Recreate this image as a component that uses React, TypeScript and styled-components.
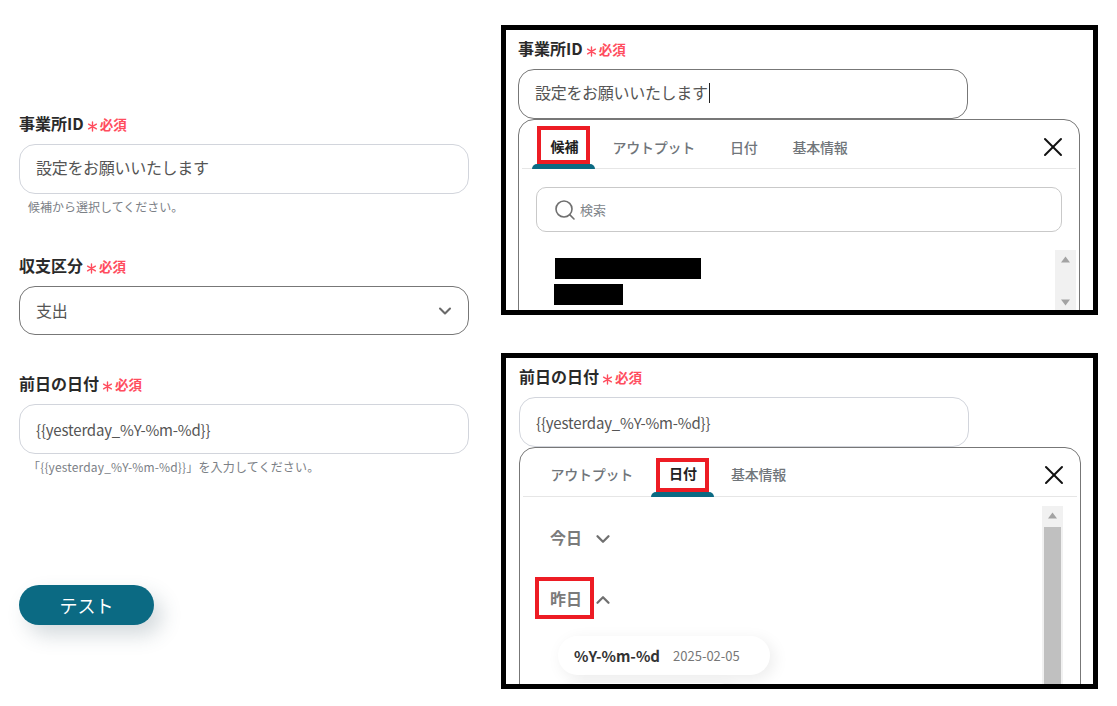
import React from 'react';
import styled, { createGlobalStyle } from 'styled-components';
import { ChevronDown, ChevronUp, Search, X } from 'lucide-react';

const GlobalStyle = createGlobalStyle`
  html, body {
    margin: 0;
    padding: 0;
    background: #fff;
    font-family: "Noto Sans CJK JP", "Noto Sans", sans-serif;
  }
`;

const Page = styled.div`
  display: flex;
  align-items: flex-start;
  width: 1117px;
  height: 706px;
  overflow: hidden;
  background: #fff;
`;

const FormColumn = styled.div`
  width: 450px;
  margin-left: 19px;
  padding-top: 114px;
`;

const ShotColumn = styled.div`
  display: flex;
  flex-direction: column;
  gap: 38px;
  width: 597px;
  margin-left: 32px;
  padding-top: 25px;
`;

const Shot = styled.section<{ $height: number; $inset: number }>`
  box-sizing: border-box;
  height: ${({ $height }) => $height}px;
  border: 5px solid #000;
  padding: 9px 0 0 ${({ $inset }) => $inset}px;
  overflow: hidden;
`;

const Field = styled.div<{ $gap?: number }>`
  margin-bottom: ${({ $gap }) => $gap ?? 40}px;
`;

const LabelRow = styled.div`
  box-sizing: content-box;
  display: flex;
  align-items: center;
  height: 18px;
  padding-bottom: 2px;
  margin-bottom: 10px;
  font-size: 16px;
  font-weight: 700;
  color: #2a2a2a;
`;

const Required = styled.span`
  display: inline-flex;
  align-items: center;
  gap: 2px;
  margin: 2px 0 0 3px;
  font-size: 13.5px;
  font-weight: 700;
  color: #ff4d5e;
`;

const TextBox = styled.div<{ $border?: string; $height?: number }>`
  box-sizing: border-box;
  display: flex;
  align-items: center;
  width: 450px;
  height: ${({ $height }) => $height ?? 50}px;
  padding: 0 16px;
  border: 1px solid ${({ $border }) => $border ?? '#d2d5dc'};
  border-radius: 16px;
  font-size: 16px;
  color: #555;
`;

const SelectBox = styled(TextBox)`
  justify-content: space-between;
  padding-right: 13px;
  svg {
    color: #6a6a6a;
  }
`;

const JapaneseValue = styled.span<{ $lift?: number }>`
  padding-bottom: ${({ $lift }) => $lift ?? 4}px;
  letter-spacing: -0.3px;
`;

const TemplateValue = styled.span`
  font-size: 15px;
  letter-spacing: -0.18px;
`;

const Caret = styled.span`
  width: 1px;
  height: 20px;
  margin: 0 0 2px 1px;
  background: #222;
`;

const Hint = styled.div<{ $tracking?: number }>`
  height: 18px;
  margin-top: 4px;
  padding-left: 9px;
  font-size: 12px;
  line-height: 18px;
  letter-spacing: ${({ $tracking }) => $tracking ?? 0}px;
  color: #7b8086;
`;

const TestButton = styled.button`
  display: block;
  width: 135px;
  height: 40px;
  margin-top: 109px;
  border: none;
  border-radius: 20px;
  background: #0b6a83;
  color: #fff;
  font-family: inherit;
  font-size: 18px;
  box-shadow: 8px 10px 20px rgba(60, 85, 100, 0.22);
`;

const Popover = styled.div`
  box-sizing: border-box;
  width: 562px;
  height: 400px;
  padding: 0 3px;
  border: 1px solid #777;
  border-radius: 16px 16px 0 0;
`;

const TabBar = styled.div`
  display: flex;
  align-items: stretch;
  justify-content: space-between;
  height: 48px;
  padding: 0 7px 0 10px;
  border-bottom: 1px solid #e6e6e6;
`;

const Tabs = styled.div`
  display: flex;
`;

const Tab = styled.div<{ $active?: boolean; $drop: number }>`
  position: relative;
  display: flex;
  align-items: center;
  padding: ${({ $drop }) => $drop}px 17.5px 0;
  margin-bottom: -1px;
  font-size: 14px;
  letter-spacing: ${({ $active }) => ($active ? 0 : -0.25)}px;
  font-weight: ${({ $active }) => ($active ? 700 : 500)};
  color: ${({ $active }) => ($active ? '#222' : '#70757a')};
  ${({ $active }) =>
    $active &&
    `
    padding-left: 18.5px;
    padding-right: 16.5px;
    &::after {
      content: '';
      position: absolute;
      left: 0;
      right: 0;
      bottom: 0;
      height: 5px;
      background: #0b6a83;
      border-radius: 5px 5px 0 0;
    }
  `}
`;

const TabMark = styled.span<{ $top: number }>`
  position: absolute;
  left: 5px;
  right: 5px;
  top: ${({ $top }) => $top}px;
  bottom: 5px;
  border: 4px solid #ed1c24;
`;

const CloseButton = styled.div`
  display: flex;
  align-items: center;
  padding-top: 5px;
  color: #111;
`;

const SearchBox = styled.div`
  box-sizing: border-box;
  display: flex;
  align-items: center;
  gap: 3px;
  width: 526px;
  height: 45px;
  margin: 18px 0 0 14px;
  padding-left: 16px;
  border: 1px solid #c9c9c9;
  border-radius: 10px;
  font-size: 13px;
  color: #80858a;
  svg {
    color: #6f6f6f;
  }
`;

const ResultArea = styled.div`
  display: flex;
  justify-content: space-between;
  margin-top: 18px;
`;

const ResultList = styled.div`
  display: flex;
  flex-direction: column;
  gap: 5px;
  padding: 8px 0 0 32px;
`;

const Redaction = styled.div<{ $width: number; $nudge?: number }>`
  width: ${({ $width }) => $width}px;
  height: 21px;
  margin-left: ${({ $nudge }) => $nudge ?? 0}px;
  background: #000;
`;

const ScrollTrack = styled.div<{ $height: number }>`
  display: flex;
  flex-direction: column;
  align-items: center;
  width: 21px;
  height: ${({ $height }) => $height}px;
  background: #f1f1f1;
`;

const ScrollArrow = styled.svg`
  display: block;
  flex: none;
  width: 21px;
  height: 21px;
  fill: #a3a3a3;
`;

const ScrollThumb = styled.div`
  width: 17px;
  flex: 1;
  background: #c0c0c0;
`;

const Spacer = styled.div`
  flex: 1;
`;

const DateBody = styled.div`
  display: flex;
  justify-content: space-between;
  padding: 9px 14px 0 0;
`;

const DateGroups = styled.div`
  display: flex;
  flex-direction: column;
  padding: 11px 0 0 27px;
`;

const GroupHead = styled.div<{ $gap: number }>`
  display: flex;
  align-items: center;
  gap: 10px;
  height: 40px;
  margin-bottom: ${({ $gap }) => $gap}px;
  font-size: 16px;
  font-weight: 700;
  color: #7b7b7b;
  svg {
    margin-top: 3px;
    color: #707070;
  }
`;

const GroupLabel = styled.span`
  position: relative;
`;

const GroupMark = styled.span`
  position: absolute;
  left: -15px;
  right: -12px;
  top: -9px;
  bottom: -9px;
  border: 4px solid #ed1c24;
`;

const Chip = styled.div`
  display: flex;
  align-items: center;
  gap: 13px;
  box-sizing: border-box;
  width: 212px;
  height: 39px;
  margin: 0 0 8px 8px;
  padding-left: 16px;
  border-radius: 20px;
  background: #fff;
  box-shadow: 4px 4px 16px rgba(0, 0, 0, 0.08);
`;

const GhostChip = styled(Chip)`
  width: 180px;
`;

const ChipName = styled.span`
  font-size: 15px;
  font-weight: 700;
  color: #333;
`;

const ChipValue = styled.span`
  font-size: 13px;
  color: #777;
`;

function RequiredMark() {
  return (
    <Required>
      <svg width="11" height="11" viewBox="0 0 11 11" stroke="currentColor" strokeWidth="1.4" strokeLinecap="round" style={{ marginTop: 4 }}>
        <path d="M5.5 1v9M1.6 3.2l7.8 4.6M9.4 3.2L1.6 7.8" />
      </svg>
      必須
    </Required>
  );
}

function TrackArrows({ thumb }: { thumb?: boolean }) {
  return (
    <>
      <ScrollArrow viewBox="0 0 21 21">
        <path d="M10.5 6.5l4.5 6H6z" />
      </ScrollArrow>
      {thumb ? (
        <ScrollThumb />
      ) : (
        <>
          <Spacer />
          <ScrollArrow viewBox="0 0 21 21">
            <path d="M10.5 14.5l4.5-6H6z" />
          </ScrollArrow>
        </>
      )}
    </>
  );
}

export default function App() {
  return (
    <Page>
      <GlobalStyle />

      {/* Left: filled-in form */}
      <FormColumn>
        <Field>
          <LabelRow>
            事業所ID
            <RequiredMark />
          </LabelRow>
          <TextBox>
            <JapaneseValue>設定をお願いいたします</JapaneseValue>
          </TextBox>
          <Hint>候補から選択してください。</Hint>
        </Field>
        <Field $gap={39}>
          <LabelRow>
            収支区分
            <RequiredMark />
          </LabelRow>
          <SelectBox $border="#777" $height={49}>
            <JapaneseValue $lift={2}>支出</JapaneseValue>
            <ChevronDown size={20} strokeWidth={2.5} />
          </SelectBox>
        </Field>
        <Field $gap={0}>
          <LabelRow>
            前日の日付
            <RequiredMark />
          </LabelRow>
          <TextBox>
            <TemplateValue>{'{{yesterday_%Y-%m-%d}}'}</TemplateValue>
          </TextBox>
          <Hint $tracking={0.16}>{'「{{yesterday_%Y-%m-%d}}」を入力してください。'}</Hint>
        </Field>
        <TestButton>テスト</TestButton>
      </FormColumn>

      {/* Right: annotated captures */}
      <ShotColumn>
        <Shot $height={290} $inset={12}>
          <LabelRow>
            事業所ID
            <RequiredMark />
          </LabelRow>
          <TextBox $border="#777">
            <JapaneseValue>設定をお願いいたします</JapaneseValue>
            <Caret />
          </TextBox>
          <Popover>
            <TabBar>
              <Tabs>
                <Tab $active $drop={2}>
                  候補
                  <TabMark $top={6} />
                </Tab>
                <Tab $drop={4}>アウトプット</Tab>
                <Tab $drop={4}>日付</Tab>
                <Tab $drop={4}>基本情報</Tab>
              </Tabs>
              <CloseButton>
                <X size={32} strokeWidth={1.5} />
              </CloseButton>
            </TabBar>
            <SearchBox>
              <Search size={24} strokeWidth={1.6} />
              検索
            </SearchBox>
            <ResultArea>
              <ResultList>
                <Redaction $width={146} $nudge={1} />
                <Redaction $width={69} />
              </ResultList>
              <ScrollTrack $height={62}>
                <TrackArrows />
              </ScrollTrack>
            </ResultArea>
          </Popover>
        </Shot>

        <Shot $height={336} $inset={13}>
          <LabelRow>
            前日の日付
            <RequiredMark />
          </LabelRow>
          <TextBox>
            <TemplateValue>{'{{yesterday_%Y-%m-%d}}'}</TemplateValue>
          </TextBox>
          <Popover>
            <TabBar>
              <Tabs>
                <Tab $drop={2}>アウトプット</Tab>
                <Tab $active $drop={0}>
                  日付
                  <TabMark $top={10} />
                </Tab>
                <Tab $drop={2}>基本情報</Tab>
              </Tabs>
              <CloseButton>
                <X size={32} strokeWidth={1.5} />
              </CloseButton>
            </TabBar>
            <DateBody>
              <DateGroups>
                <GroupHead $gap={21}>
                  <GroupLabel>今日</GroupLabel>
                  <ChevronDown size={22} strokeWidth={2.5} />
                </GroupHead>
                <GroupHead $gap={18}>
                  <GroupLabel>
                    昨日
                    <GroupMark />
                  </GroupLabel>
                  <ChevronUp size={22} strokeWidth={2.5} />
                </GroupHead>
                <Chip>
                  <ChipName>%Y-%m-%d</ChipName>
                  <ChipValue>2025-02-05</ChipValue>
                </Chip>
                <GhostChip />
              </DateGroups>
              <ScrollTrack $height={200}>
                <TrackArrows thumb />
              </ScrollTrack>
            </DateBody>
          </Popover>
        </Shot>
      </ShotColumn>
    </Page>
  );
}
